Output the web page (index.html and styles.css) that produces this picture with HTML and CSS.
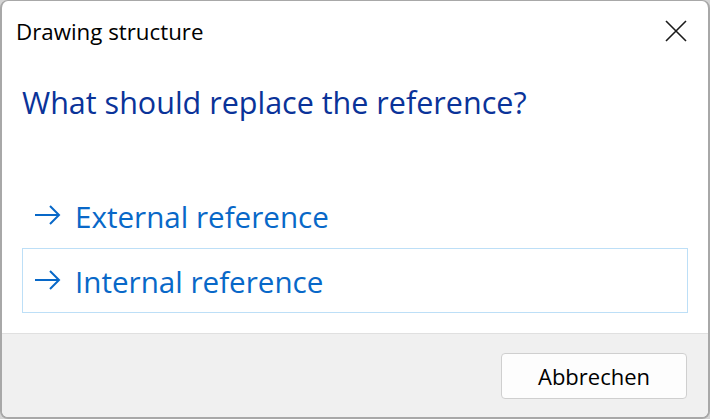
FILE: index.html
```html
<!DOCTYPE html>
<html>
<head>
<meta charset="utf-8">
<link rel="stylesheet" href="styles.css">
</head>
<body>
<div class="dialog">
  <div class="titlebar">
    <span class="title">Drawing structure</span>
    <svg class="close" width="22" height="22" viewBox="0 0 22 22"><path d="M1 1 L21 21 M21 1 L1 21" stroke="#1a1a1a" stroke-width="1.6" fill="none"/></svg>
  </div>
  <div class="content">
    <div class="instruction">What should replace the reference?</div>
    <div class="links">
      <div class="link">
        <svg class="arrow" width="26" height="20" viewBox="0 0 26 20"><path d="M0 10 H24 M15 1 L24 10 L15 19" stroke="#0868c8" stroke-width="2" fill="none"/></svg>
        <span>External reference</span>
      </div>
      <div class="link selected">
        <svg class="arrow" width="26" height="20" viewBox="0 0 26 20"><path d="M0 10 H24 M15 1 L24 10 L15 19" stroke="#0868c8" stroke-width="2" fill="none"/></svg>
        <span>Internal reference</span>
      </div>
    </div>
  </div>
  <div class="footer">
    <button class="btn">Abbrechen</button>
  </div>
</div>
</body>
</html>
```

FILE: styles.css
```css
html, body {
  margin: 0;
  padding: 0;
  background: #d4d4d4;
  width: 710px;
  height: 419px;
  overflow: hidden;
}
.dialog {
  box-sizing: border-box;
  width: 710px;
  height: 419px;
  background: #ffffff;
  border: solid #a8a8a8;
  border-width: 1px 2px 2px 2px;
  border-radius: 8px;
  overflow: hidden;
  display: flex;
  flex-direction: column;
  font-family: "Open Sans", "Noto Sans", sans-serif;
}
.titlebar {
  height: 61px;
  display: flex;
  align-items: center;
  justify-content: space-between;
  padding: 0 21px 0 14px;
  flex: none;
}
.title {
  font-size: 22.3px;
  color: #000;
  margin-top: -1px;
}
.close {
  display: block;
  margin-top: -1px;
}
.content {
  flex: 1;
  padding: 0 20px 0 20px;
}
.instruction {
  font-size: 30.5px;
  color: #0a3399;
  line-height: 40px;
  margin-top: 20px;
}
.links {
  margin-top: 61px;
  display: flex;
  flex-direction: column;
}
.link {
  box-sizing: border-box;
  height: 65px;
  border: 1px solid transparent;
  display: flex;
  align-items: center;
  padding-left: 12px;
  padding-top: 2px;
  font-size: 29.6px;
  color: #0868c8;
}
.link.selected {
  border-color: #bddff7;
}
.link .arrow {
  margin-right: 14px;
  margin-top: -4px;
}
.footer {
  flex: none;
  height: 84px;
  box-sizing: border-box;
  background: #f0f0f0;
  border-top: 1px solid #e0e0e0;
  display: flex;
  align-items: center;
  justify-content: flex-end;
  padding-right: 21px;
}
.btn {
  width: 186px;
  height: 46px;
  background: #fdfdfd;
  border: 1px solid #cfcfcf;
  border-radius: 4px;
  font-family: "Open Sans", "Noto Sans", sans-serif;
  font-size: 22px;
  color: #000;
  padding: 0;
}
```
